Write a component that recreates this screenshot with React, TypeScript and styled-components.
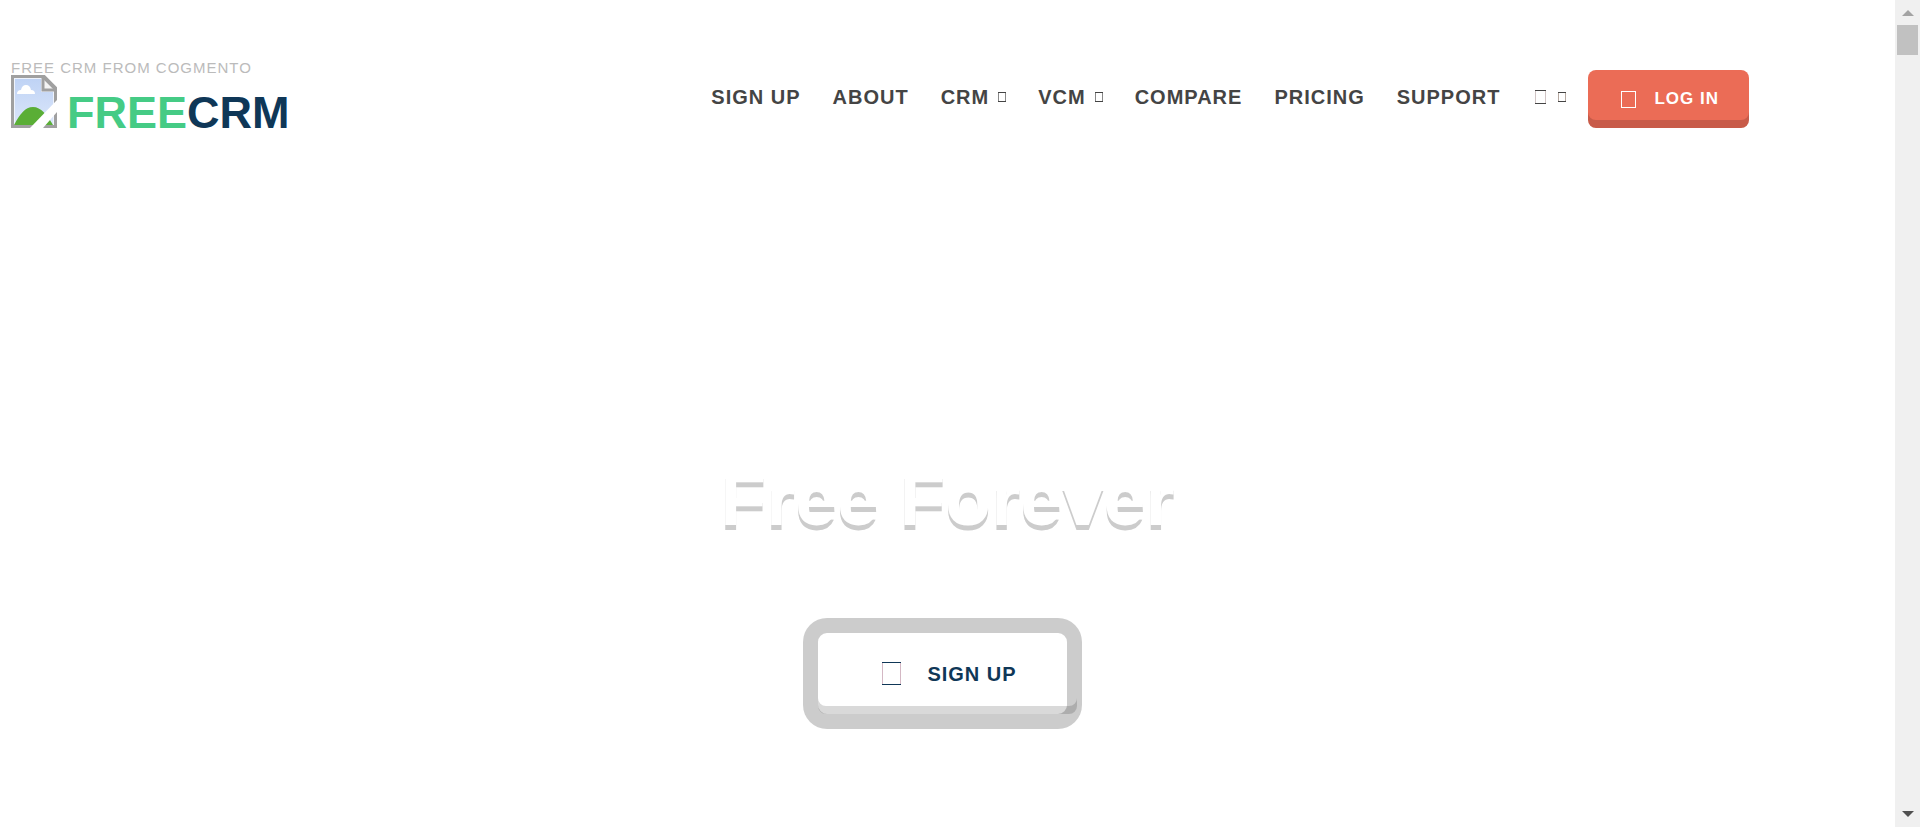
import React from 'react';
import styled, { createGlobalStyle } from 'styled-components';

const GlobalStyle = createGlobalStyle`
  *, *::before, *::after { box-sizing: border-box; }
  body {
    margin: 0;
    background: #fff;
    overflow: hidden;
    font-family: Arial, "Liberation Sans", sans-serif;
  }
`;

const Shell = styled.div`
  display: flex;
  height: 100vh;
`;

const Page = styled.div`
  flex: 1;
  min-width: 0;
`;

const Header = styled.header`
  display: flex;
  justify-content: space-between;
  align-items: flex-start;
  padding: 57px 146px 0 11px;
`;

const Brand = styled.div`
  display: flex;
  flex-direction: column;
`;

const Tagline = styled.span`
  height: 18px;
  font-size: 15px;
  line-height: 22px;
  letter-spacing: 1px;
  color: #bbb;
  text-transform: uppercase;
`;

const BrandLink = styled.a`
  display: flex;
  align-items: flex-start;
  gap: 10px;
  text-decoration: none;
`;

const BrandName = styled.span`
  padding-top: 12px;
  font-size: 45px;
  line-height: 52px;
  font-weight: 700;
  color: #0f3757;
`;

const BrandAccent = styled.span`
  color: #45cb85;
`;

const Nav = styled.nav`
  display: flex;
  align-items: center;
  padding-top: 13px;
`;

const NavLink = styled.a`
  display: flex;
  align-items: center;
  padding: 0 16px 4px;
  font-size: 20px;
  line-height: 24px;
  font-weight: 700;
  letter-spacing: 1px;
  white-space: nowrap;
  color: #444;
  text-decoration: none;
`;

const Glyph = styled.span<{ $w: number; $h: number; $side?: string }>`
  flex: none;
  width: ${p => p.$w}px;
  height: ${p => p.$h}px;
  border: solid currentColor;
  border-width: 1px 0;
  box-shadow:
    inset 1px 0 ${p => p.$side ?? 'currentColor'},
    inset -1px 0 ${p => p.$side ?? 'currentColor'};
`;

const Caret = styled(Glyph)`
  margin-left: 9px;
`;

const LanguageLink = styled(NavLink)`
  gap: 3px;
  padding-left: 19px;
`;

const LoginButton = styled.button`
  display: flex;
  align-items: center;
  gap: 18px;
  height: 58px;
  margin-left: 6px;
  padding: 0 30px 0 33px;
  border: 0;
  border-radius: 8px;
  background: #eb6c56;
  box-shadow: inset 0 -8px 0 rgba(0, 0, 0, 0.15);
  color: #fff;
  font: 700 17px/24px Arial, "Liberation Sans", sans-serif;
  letter-spacing: 1px;
  white-space: nowrap;
`;

const Hero = styled.main`
  display: flex;
  flex-direction: column;
  align-items: center;
  padding-top: 315px;
`;

const HeroTitle = styled.h1`
  margin: 0;
  font-size: 75px;
  line-height: 90px;
  font-weight: 700;
  color: #fff;
  text-shadow: 0 5px 0 #ccc;
`;

const SignUpButton = styled.button`
  position: relative;
  display: flex;
  align-items: center;
  gap: 26px;
  height: 111px;
  margin: 74px 10px 0 0;
  padding: 0 50px 0 64px;
  border: 15px solid rgba(0, 0, 0, 0.2);
  border-radius: 24px;
  background: #fff;
  background-clip: padding-box;
  color: #0f3757;
  font: 700 20px/24px Arial, "Liberation Sans", sans-serif;
  letter-spacing: 1px;

  &::after {
    content: '';
    position: absolute;
    inset: 0 -10px 0 0;
    border-radius: 8px;
    box-shadow: inset 0 -8px 0 rgba(0, 0, 0, 0.15);
  }
`;

const ScrollTrack = styled.div`
  display: flex;
  flex-direction: column;
  align-items: center;
  width: 25px;
  padding: 10px 0;
  background: #f0f0f0;
`;

const ScrollThumb = styled.div`
  width: 21px;
  height: 30px;
  margin: 9px 0 auto;
  background: #c1c1c1;
`;

const BrokenImage = () => (
  <svg width="46" height="53" viewBox="0 0 46 53" role="img" aria-label="Free CRM">
    <defs>
      <linearGradient id="sky" x1="0" y1="0" x2="0" y2="1">
        <stop offset="0" stopColor="#bfd3f5" />
        <stop offset="1" stopColor="#dbe6fa" />
      </linearGradient>
    </defs>
    <path d="M2 2H32L44 15V51H2Z" fill="#eef3fc" />
    <path d="M4 4H30V17H42V50H4Z" fill="url(#sky)" />
    <path d="M6 19q0-4 4-4q1-5 5-5q4 0 5 5q4 0 4 4Z" fill="#fff" />
    <path d="M3 50C9 39 14 32 22 32S36 40 42 50Z" fill="#5aae36" />
    <path d="M32 2V15H44Z" fill="#f4f4f4" />
    <path d="M1 1H32L45 14V52H1Z" fill="none" stroke="#a0a0a0" strokeWidth="4" />
    <path d="M32 2V15H45" fill="none" stroke="#a0a0a0" strokeWidth="3" />
    <path d="M46 25V37L32 53H19Z" fill="#fff" />
  </svg>
);

const App = () => (
  <>
    <GlobalStyle />
    <Shell>
      <Page>
        <Header>
          <Brand>
            <Tagline>Free CRM from Cogmento</Tagline>
            <BrandLink href="#">
              <BrokenImage />
              <BrandName><BrandAccent>FREE</BrandAccent>CRM</BrandName>
            </BrandLink>
          </Brand>
          <Nav>
            <NavLink href="#">SIGN UP</NavLink>
            <NavLink href="#">ABOUT</NavLink>
            <NavLink href="#">CRM<Caret $w={8} $h={10} $side="#888" /></NavLink>
            <NavLink href="#">VCM<Caret $w={8} $h={10} $side="#888" /></NavLink>
            <NavLink href="#">COMPARE</NavLink>
            <NavLink href="#">PRICING</NavLink>
            <NavLink href="#">SUPPORT</NavLink>
            <LanguageLink href="#" aria-label="Language">
              <Glyph $w={11} $h={14} $side="#d0c4c4" />
              <Caret $w={8} $h={10} $side="#b5a8a0" />
            </LanguageLink>
            <LoginButton>
              <Glyph $w={15} $h={17} />
              LOG IN
            </LoginButton>
          </Nav>
        </Header>
        <Hero>
          <HeroTitle>Free Forever</HeroTitle>
          <SignUpButton>
            <Glyph $w={19} $h={23} $side="#d4b8c4" />
            SIGN UP
          </SignUpButton>
        </Hero>
      </Page>
      <ScrollTrack aria-hidden="true">
        <svg width="12" height="6" viewBox="0 0 12 6"><path d="M6 0L12 6H0Z" fill="#a3a3a3" /></svg>
        <ScrollThumb />
        <svg width="12" height="6" viewBox="0 0 12 6"><path d="M0 0H12L6 6Z" fill="#505050" /></svg>
      </ScrollTrack>
    </Shell>
  </>
);

export default App;
